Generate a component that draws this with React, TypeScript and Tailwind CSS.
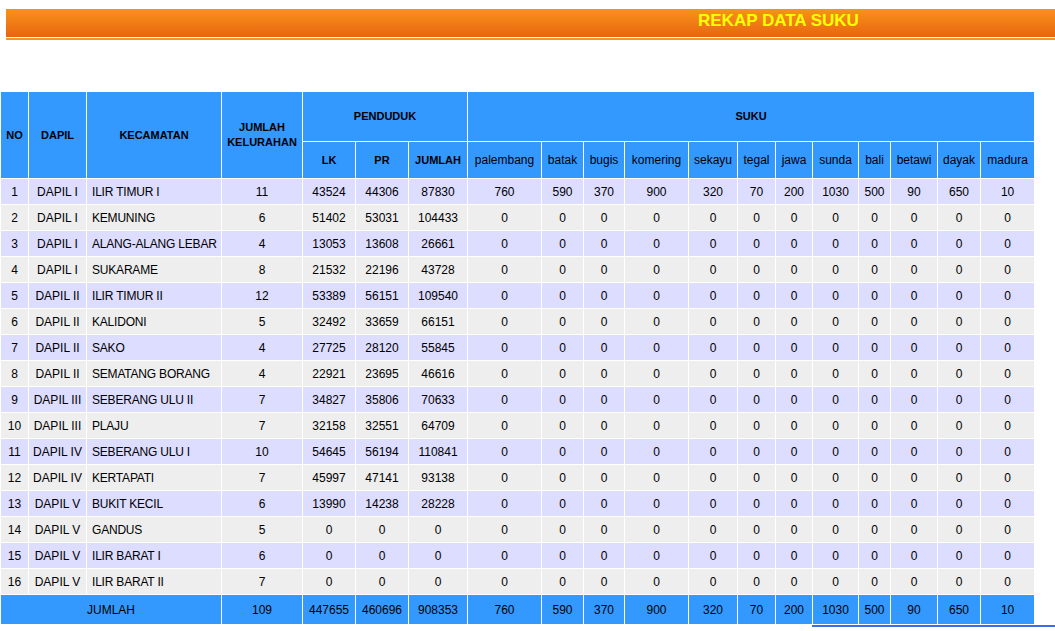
const SUKU = [
  "palembang",
  "batak",
  "bugis",
  "komering",
  "sekayu",
  "tegal",
  "jawa",
  "sunda",
  "bali",
  "betawi",
  "dayak",
  "madura",
];

const ZERO = [0, 0, 0, 0, 0, 0, 0, 0, 0, 0, 0, 0];

type Row = [number, string, string, number, number, number, number, number[]];

const rows: Row[] = [
  [1, "DAPIL I", "ILIR TIMUR I", 11, 43524, 44306, 87830, [760, 590, 370, 900, 320, 70, 200, 1030, 500, 90, 650, 10]],
  [2, "DAPIL I", "KEMUNING", 6, 51402, 53031, 104433, ZERO],
  [3, "DAPIL I", "ALANG-ALANG LEBAR", 4, 13053, 13608, 26661, ZERO],
  [4, "DAPIL I", "SUKARAME", 8, 21532, 22196, 43728, ZERO],
  [5, "DAPIL II", "ILIR TIMUR II", 12, 53389, 56151, 109540, ZERO],
  [6, "DAPIL II", "KALIDONI", 5, 32492, 33659, 66151, ZERO],
  [7, "DAPIL II", "SAKO", 4, 27725, 28120, 55845, ZERO],
  [8, "DAPIL II", "SEMATANG BORANG", 4, 22921, 23695, 46616, ZERO],
  [9, "DAPIL III", "SEBERANG ULU II", 7, 34827, 35806, 70633, ZERO],
  [10, "DAPIL III", "PLAJU", 7, 32158, 32551, 64709, ZERO],
  [11, "DAPIL IV", "SEBERANG ULU I", 10, 54645, 56194, 110841, ZERO],
  [12, "DAPIL IV", "KERTAPATI", 7, 45997, 47141, 93138, ZERO],
  [13, "DAPIL V", "BUKIT KECIL", 6, 13990, 14238, 28228, ZERO],
  [14, "DAPIL V", "GANDUS", 5, 0, 0, 0, ZERO],
  [15, "DAPIL V", "ILIR BARAT I", 6, 0, 0, 0, ZERO],
  [16, "DAPIL V", "ILIR BARAT II", 7, 0, 0, 0, ZERO],
];

const totals = [760, 590, 370, 900, 320, 70, 200, 1030, 500, 90, 650, 10];

export default function App() {
  return (
    <div className="min-h-[631px] bg-white font-['Liberation_Sans',Arial,sans-serif] text-black">
      {/* Title bar */}
      <div className="ml-[6px] pt-[9px]">
        <div className="h-[28px] bg-gradient-to-b from-[#f8921c] to-[#e8640f] pl-[692px]">
          <span className="text-[17px] font-bold leading-[22px] text-[#ffff00]">REKAP DATA SUKU</span>
        </div>
        <div className="mt-[1px] h-[2px] bg-[#f7931e]" />
      </div>

      <table className="mt-[51px] w-[1035px] table-fixed border-separate border-spacing-[1px] text-[12px]">
        <colgroup>
          <col className="w-[27px]" />
          <col className="w-[57px]" />
          <col className="w-[134px]" />
          <col className="w-[80px]" />
          <col className="w-[52px]" />
          <col className="w-[52px]" />
          <col className="w-[58px]" />
          <col className="w-[73px]" />
          <col className="w-[41px]" />
          <col className="w-[40px]" />
          <col className="w-[63px]" />
          <col className="w-[48px]" />
          <col className="w-[37px]" />
          <col className="w-[36px]" />
          <col className="w-[45px]" />
          <col className="w-[31px]" />
          <col className="w-[46px]" />
          <col className="w-[42px]" />
          <col className="w-[53px]" />
        </colgroup>
        <thead>
          <tr className="h-[49px] bg-[#3399ff] text-[11px] font-bold">
            <th rowSpan={2} className="p-0">NO</th>
            <th rowSpan={2} className="p-0">DAPIL</th>
            <th rowSpan={2} className="p-0">KECAMATAN</th>
            <th rowSpan={2} className="p-0 leading-[15px]">
              JUMLAH
              <br />
              KELURAHAN
            </th>
            <th colSpan={3} className="p-0">PENDUDUK</th>
            <th colSpan={12} className="p-0">SUKU</th>
          </tr>
          <tr className="h-[36px] bg-[#3399ff]">
            <th className="p-0 text-[11px] font-bold">LK</th>
            <th className="p-0 text-[11px] font-bold">PR</th>
            <th className="p-0 text-[11px] font-bold">JUMLAH</th>
            {SUKU.map((s) => (
              <th key={s} className="p-0 text-[12px] font-normal">
                {s}
              </th>
            ))}
          </tr>
        </thead>
        <tbody>
          {rows.map(([no, dapil, kec, kel, lk, pr, jml, suku]) => (
            <tr key={no} className={`h-[25px] ${no % 2 === 1 ? "bg-[#ddddff]" : "bg-[#eeeeee]"}`}>
              <td className="p-0 text-center">{no}</td>
              <td className="p-0 text-center whitespace-nowrap">{dapil}</td>
              <td className="p-0 pl-[5px] whitespace-nowrap tracking-[-0.2px]">{kec}</td>
              <td className="p-0 text-center">{kel}</td>
              <td className="p-0 text-center">{lk}</td>
              <td className="p-0 text-center">{pr}</td>
              <td className="p-0 text-center">{jml}</td>
              {suku.map((v, i) => (
                <td key={i} className="p-0 text-center">
                  {v}
                </td>
              ))}
            </tr>
          ))}
          <tr className="h-[29px] bg-[#3399ff]">
            <td colSpan={3} className="p-0 text-center">JUMLAH</td>
            <td className="p-0 text-center">109</td>
            <td className="p-0 text-center">447655</td>
            <td className="p-0 text-center">460696</td>
            <td className="p-0 text-center">908353</td>
            {totals.map((v, i) => (
              <td key={i} className="p-0 text-center">
                {v}
              </td>
            ))}
          </tr>
        </tbody>
      </table>
      <div className="ml-[812px] h-[2px] bg-[#3a6de6]" />
    </div>
  );
}
